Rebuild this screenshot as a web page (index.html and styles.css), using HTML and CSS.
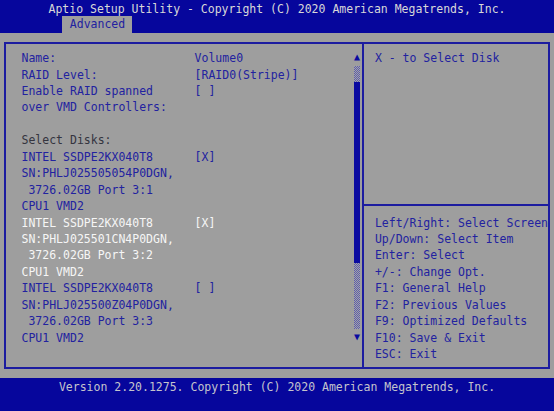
FILE: index.html
```html
<!DOCTYPE html>
<html>
  <head>
    <title>Aptio Setup Utility</title>
    <link rel="stylesheet" href="styles.css">
  </head>
  <body>
    <div class="screen">
      <div class="title">Aptio Setup Utility - Copyright (C) 2020 American Megatrends, Inc.</div>
      <div class="tabbar"><span class="tab">Advanced</span></div>

      <div class="main">
        <div class="frame">
          <div class="page">
            <div class="items">
              <div class="item">
                <span class="label">Name:</span><span class="value">Volume0</span>
              </div>
              <div class="item">
                <span class="label">RAID Level:</span><span class="value">[RAID0(Stripe)]</span>
              </div>
              <div class="item">
                <span class="label">Enable RAID spanned
over VMD Controllers:</span><span class="value">[ ]</span>
              </div>
              <div class="item blank"></div>
              <div class="item subtitle">
                <span class="label">Select Disks:</span>
              </div>
              <div class="item">
                <span class="label">INTEL SSDPE2KX040T8
SN:PHLJ025505054P0DGN,
 3726.02GB Port 3:1
CPU1 VMD2</span><span class="value">[X]</span>
              </div>
              <div class="item selected">
                <span class="label">INTEL SSDPE2KX040T8
SN:PHLJ025501CN4P0DGN,
 3726.02GB Port 3:2
CPU1 VMD2</span><span class="value">[X]</span>
              </div>
              <div class="item">
                <span class="label">INTEL SSDPE2KX040T8
SN:PHLJ025500Z04P0DGN,
 3726.02GB Port 3:3
CPU1 VMD2</span><span class="value">[ ]</span>
              </div>
            </div>

            <div class="scrollbar">
              <div class="arrow">&#9650;</div>
              <div class="track">
                <div class="shade top"></div>
                <div class="thumb"></div>
                <div class="shade bottom"></div>
              </div>
              <div class="arrow">&#9660;</div>
            </div>
          </div>

          <div class="help">
            <div class="desc">X - to Select Disk</div>
            <div class="keys">Left/Right: Select Screen
Up/Down: Select Item
Enter: Select
+/-: Change Opt.
F1: General Help
F2: Previous Values
F9: Optimized Defaults
F10: Save &amp; Exit
ESC: Exit</div>
          </div>
        </div>
      </div>

      <div class="footer">Version 2.20.1275. Copyright (C) 2020 American Megatrends, Inc.</div>
    </div>
  </body>
</html>
```

FILE: styles.css
```css
/* 80 x 25 text screen: one cell is 6.925px wide, 16.44px tall */
body {
  margin: 0;
  padding: 0;
  background-color: #06069c;
}

.screen {
  width: 554px;
  height: 411px;
  display: flex;
  flex-direction: column;
  font-family: "DejaVu Sans Mono", "Liberation Mono", monospace;
  font-size: 11.5px;
  line-height: 16.44px;
  overflow: hidden;
}

.title {
  height: 16.44px;
  padding-top: 1px;
  box-sizing: border-box;
  text-align: center;
  color: #d8d8d8;
  background-color: #06069c;
  white-space: pre;
}

.tabbar {
  height: 16.44px;
  padding-left: 62.3px;
  background-color: #06069c;
}

.tab {
  display: inline-block;
  height: 16.44px;
  padding: 0 6.925px 0 7.5px;
  background-color: #9e9e9e;
  color: #2222a0;
}

.main {
  height: 345.24px;
  box-sizing: border-box;
  padding: 9px 4px;
  background-color: #9e9e9e;
}

.frame {
  height: 100%;
  box-sizing: border-box;
  border: 2px solid #1c1ca0;
  display: flex;
}

/* left side: setup items + scroll bar */
.page {
  width: 365px;
  box-sizing: border-box;
  border-right: 2px solid #1c1ca0;
  padding: 6.3px 2px 0 15.5px;
  display: flex;
}

.items {
  flex: 1;
}

.item {
  display: flex;
  color: #2222a0;
}

.item.blank {
  height: 16.44px;
}

.label {
  width: 173.1px;
  white-space: pre;
}

.value {
  white-space: pre;
}

.subtitle {
  color: #34343e;
}

.selected {
  color: #f6f6f6;
}

.scrollbar {
  width: 6.925px;
  margin-top: -1px;
  display: flex;
  flex-direction: column;
  align-items: center;
  color: #0a0aa0;
}

.arrow {
  height: 16.44px;
  font-size: 10px;
  line-height: 16.44px;
}

.track {
  width: 6px;
  height: 263px;
  display: flex;
  flex-direction: column;
}

.shade {
  background-color: #9e9e9e;
  background-image: repeating-conic-gradient(#5c5cac 0 25%, #a4a4a8 0 50%);
  background-size: 2px 2px;
}

.shade.top {
  flex: 1;
}

.shade.bottom {
  flex: 4;
}

.thumb {
  flex: 11;
  background-color: #0a0aa0;
}

/* right side: help text */
.help {
  flex: 1;
  display: flex;
  flex-direction: column;
  color: #2222a0;
}

.desc {
  height: 162px;
  box-sizing: border-box;
  border-bottom: 2px solid #1c1ca0;
  padding: 6.3px 0 0 10.5px;
}

.keys {
  padding: 8.7px 0 0 10.5px;
  white-space: pre;
}

.footer {
  height: 32.88px;
  padding-top: 1px;
  box-sizing: border-box;
  text-align: center;
  color: #c4c4cc;
  background-color: #06069c;
  white-space: pre;
}
```
